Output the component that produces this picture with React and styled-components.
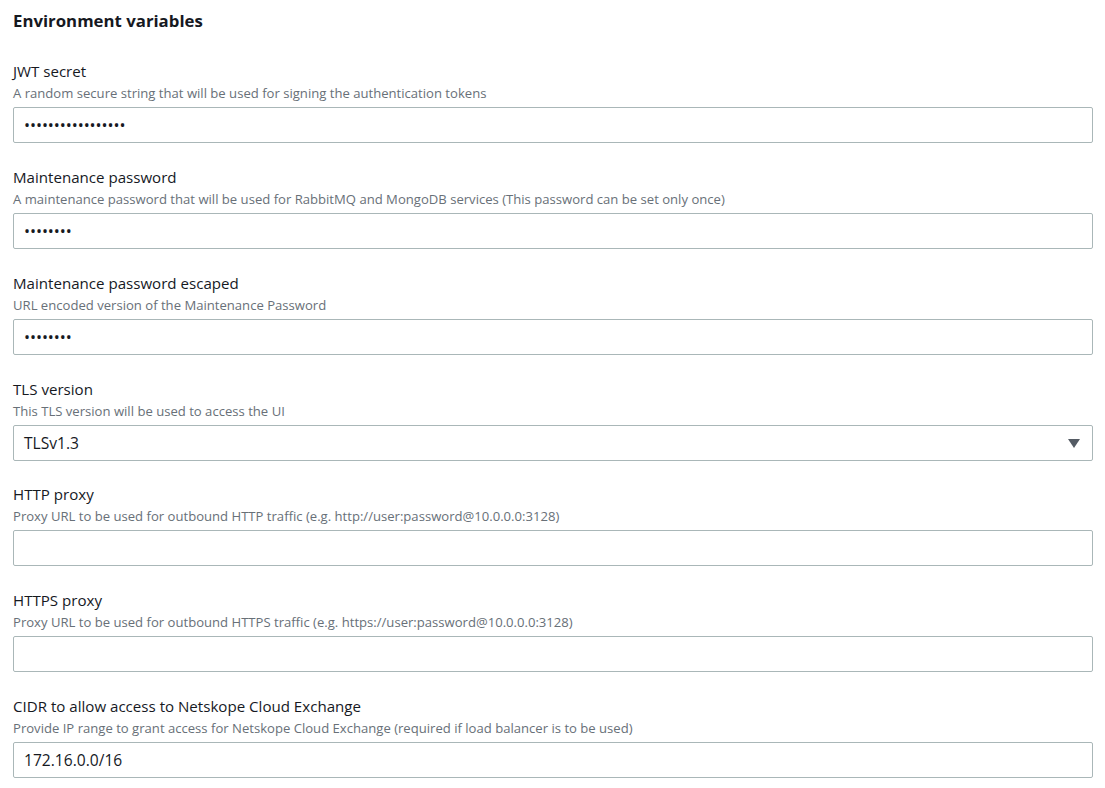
import styled, { createGlobalStyle } from "styled-components";

const GlobalStyle = createGlobalStyle`
  body {
    margin: 0;
    background: #ffffff;
    font-family: "Open Sans", "Noto Sans", sans-serif;
    color: #16191f;
  }
`;

const Page = styled.div`
  padding: 11px 12px 0 13px;
`;

const Heading = styled.h2`
  margin: 0 0 30px 0;
  font-size: 16.8px;
  line-height: 20px;
  font-weight: 700;
  color: #16191f;
`;

const Fields = styled.div`
  display: flex;
  flex-direction: column;
  gap: 23.85px;
`;

const Field = styled.div`
  display: flex;
  flex-direction: column;
`;

const Label = styled.label`
  font-size: 15.1px;
  line-height: 21px;
  color: #16191f;
`;

const Description = styled.div`
  margin-top: 3px;
  font-size: 13.1px;
  line-height: 16px;
  color: #687078;
`;

const Input = styled.input`
  box-sizing: border-box;
  margin-top: 6px;
  width: 100%;
  height: 36px;
  padding: 0 10px;
  border: 1px solid #aab7b8;
  border-radius: 2px;
  background: #ffffff;
  font-family: inherit;
  font-size: ${(p) => (p.type === "password" ? "16px" : "15.6px")};
  color: #16191f;
  outline: none;
  letter-spacing: ${(p) => (p.type === "password" ? "-0.05px" : "normal")};
`;

const Select = styled.div`
  box-sizing: border-box;
  margin-top: 6px;
  height: 36px;
  padding: 0 12px 0 10px;
  border: 1px solid #aab7b8;
  border-radius: 2px;
  display: flex;
  align-items: center;
  justify-content: space-between;
  font-size: 15.6px;
  color: #16191f;
`;

const Caret = () => (
  <svg width="12" height="10" viewBox="0 0 12 10">
    <path d="M0 1h12L6 10z" fill="#545b64" />
  </svg>
);

const fields = [
  {
    label: "JWT secret",
    desc: "A random secure string that will be used for signing the authentication tokens",
    type: "password",
    value: "xxxxxxxxxxxxxxxxx",
  },
  {
    label: "Maintenance password",
    desc: "A maintenance password that will be used for RabbitMQ and MongoDB services (This password can be set only once)",
    type: "password",
    value: "xxxxxxxx",
  },
  {
    label: "Maintenance password escaped",
    desc: "URL encoded version of the Maintenance Password",
    type: "password",
    value: "xxxxxxxx",
  },
  {
    label: "TLS version",
    desc: "This TLS version will be used to access the UI",
    select: "TLSv1.3",
  },
  {
    label: "HTTP proxy",
    desc: "Proxy URL to be used for outbound HTTP traffic (e.g. http://user:password@10.0.0.0:3128)",
    type: "text",
    value: "",
  },
  {
    label: "HTTPS proxy",
    desc: "Proxy URL to be used for outbound HTTPS traffic (e.g. https://user:password@10.0.0.0:3128)",
    type: "text",
    value: "",
  },
  {
    label: "CIDR to allow access to Netskope Cloud Exchange",
    desc: "Provide IP range to grant access for Netskope Cloud Exchange (required if load balancer is to be used)",
    type: "text",
    value: "172.16.0.0/16",
  },
];

const App = () => {
  return (
    <Page>
      <GlobalStyle />
      <Heading>Environment variables</Heading>
      <Fields>
        {fields.map((f) => (
          <Field key={f.label}>
            <Label>{f.label}</Label>
            <Description>{f.desc}</Description>
            {f.select ? (
              <Select>
                <span>{f.select}</span>
                <Caret />
              </Select>
            ) : (
              <Input type={f.type} value={f.value} readOnly />
            )}
          </Field>
        ))}
      </Fields>
    </Page>
  );
};

export default App;
